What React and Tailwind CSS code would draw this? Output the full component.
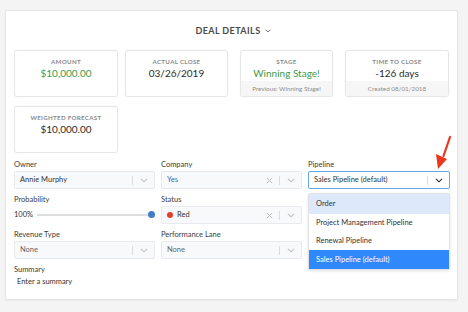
import React from 'react';

const Chevron = ({ className = '' }) => (
  <svg viewBox="0 0 10 6" className={className} fill="none" stroke="currentColor" strokeWidth="1.4" strokeLinecap="round" strokeLinejoin="round">
    <path d="M1.5 1.2 5 4.6 8.5 1.2" />
  </svg>
);

const Cross = () => (
  <svg viewBox="0 0 8 8" className="w-[7px] h-[7px] text-[#b8b8b8]" fill="none" stroke="currentColor" strokeWidth="1.1">
    <path d="M1 1 7 7M7 1 1 7" />
  </svg>
);

const StatCard = ({ label, value, green, footer, width }) => (
  <div className={`${width} h-[47px] bg-white border border-[#e7e7e7] rounded-[3px] shadow-[0_0_2px_rgba(0,0,0,0.06)] flex flex-col overflow-hidden`}>
    <div className="flex-1 flex flex-col items-center pt-[6px]">
      <div className="text-[6.2px] font-bold tracking-[0.3px] text-[#8a8a8a] leading-[10px]">{label}</div>
      <div className={`text-[10px] leading-[12px] ${green ? 'text-[#3d9a4c]' : 'text-[#2b2b2b]'}`}>{value}</div>
    </div>
    {footer && (
      <div className="h-[15px] bg-[#f6f6f6] flex items-center justify-center text-[6.3px] text-[#8f8f8f]">{footer}</div>
    )}
  </div>
);

const Select = ({ children, clear, valueClass = 'text-[#333]', active }) => (
  <div className={`h-[18px] flex items-center rounded-[2px] border ${active ? 'border-[#6aa6ea] bg-white' : 'border-[#e8eaee] bg-[#f8f9fb]'}`}>
    <div className={`flex-1 pl-[5px] text-[7.5px] ${valueClass} flex items-center gap-[4px]`}>{children}</div>
    {clear && <div className="w-[10px] flex justify-center"><Cross /></div>}
    <div className="w-px h-[9px] bg-[#dcdcdc] ml-[5px]" />
    <div className={`w-[21px] flex justify-center ${active ? 'text-[#333]' : 'text-[#c4c4c4]'}`}>
      <Chevron className="w-[8px] h-[5px]" />
    </div>
  </div>
);

const Label = ({ children }) => (
  <div className="text-[7.5px] text-[#3a3a3a] leading-[10px] mb-[1px]">{children}</div>
);

export default function App() {
  return (
    <div className="w-[468px] h-[312px] bg-[#f4f4f4] pt-[10px] pl-[5px] relative" style={{ fontFamily: 'Lato, "Open Sans", sans-serif' }}>
      <div className="w-[453px] h-[290px] bg-white border border-[#e6e6e6] rounded-[2px] shadow-[0_1px_2px_rgba(0,0,0,0.06)] px-[8px]">
        <div className="h-[39px] flex items-center justify-center pt-[1px] pl-[4px]">
          <span className="text-[9px] font-bold tracking-[0.4px] text-[#4a4a4a]">DEAL DETAILS</span>
          <Chevron className="w-[6px] h-[4px] ml-[5px] text-[#555]" />
        </div>

        <div className="flex">
          <StatCard width="w-[104px]" label="AMOUNT" value="$10,000.00" green />
          <div className="w-[7px]" />
          <StatCard width="w-[103px]" label="ACTUAL CLOSE" value="03/26/2019" />
          <div className="w-[12px]" />
          <StatCard width="w-[93px]" label="STAGE" value="Winning Stage!" green footer="Previous: Winning Stage!" />
          <div className="w-[12px]" />
          <StatCard width="w-[104px]" label="TIME TO CLOSE" value="-126 days" footer="Created 08/01/2018" />
        </div>
        <div className="mt-[9px] flex">
          <StatCard width="w-[104px]" label="WEIGHTED FORECAST" value="$10,000.00" />
        </div>

        <div className="grid grid-cols-[141px_141px_142px] gap-x-[6px] gap-y-[6px] mt-[7px]">
          <div>
            <Label>Owner</Label>
            <Select>Annie Murphy</Select>
          </div>
          <div>
            <Label>Company</Label>
            <Select clear valueClass="text-[#2a6cc0]">Yes</Select>
          </div>
          <div className="relative">
            <Label>Pipeline</Label>
            <Select active>Sales Pipeline (default)</Select>
            <div className="absolute left-0 right-0 top-[33px] bg-white border border-[#e3e3e3] rounded-[2px] shadow-[0_1px_3px_rgba(0,0,0,0.12)] text-[7.5px] text-[#333] z-10">
              <div className="h-[20px] flex items-center pl-[7px] bg-[#dde9fb]">Order</div>
              <div className="h-[18px] flex items-center pl-[7px]">Project Management Pipeline</div>
              <div className="h-[18px] flex items-center pl-[7px]">Renewal Pipeline</div>
              <div className="h-[19px] flex items-center pl-[7px] bg-[#2f89fc] text-white">Sales Pipeline (default)</div>
            </div>
          </div>

          <div>
            <Label>Probability</Label>
            <div className="h-[18px] flex items-center">
              <span className="text-[7.5px] text-[#333] w-[23px]">100%</span>
              <div className="flex-1 h-[2px] bg-[#dedede] relative">
                <div className="absolute right-[-3px] top-[-3px] w-[7px] h-[7px] rounded-full bg-[#3f7ec4]" />
              </div>
              <div className="w-[3px]" />
            </div>
          </div>
          <div>
            <Label>Status</Label>
            <Select clear>
              <span className="w-[6px] h-[6px] rounded-full bg-[#e2402b] inline-block" />
              <span>Red</span>
            </Select>
          </div>
          <div />

          <div>
            <Label>Revenue Type</Label>
            <Select valueClass="text-[#666]">None</Select>
          </div>
          <div>
            <Label>Performance Lane</Label>
            <Select valueClass="text-[#666]">None</Select>
          </div>
          <div />
        </div>

        <div className="mt-[6px]">
          <Label>Summary</Label>
          <div className="text-[7.5px] text-[#333] pl-[3px]">Enter a summary</div>
        </div>
      </div>

      <svg className="absolute left-[432px] top-[134px] w-[22px] h-[40px]" viewBox="0 0 22 40">
        <path d="M18 3 L11.5 22" stroke="#e8381f" strokeWidth="2.2" strokeLinecap="round" />
        <polygon points="4,20 15,25 6,35" fill="#e8381f" />
      </svg>
    </div>
  );
}
